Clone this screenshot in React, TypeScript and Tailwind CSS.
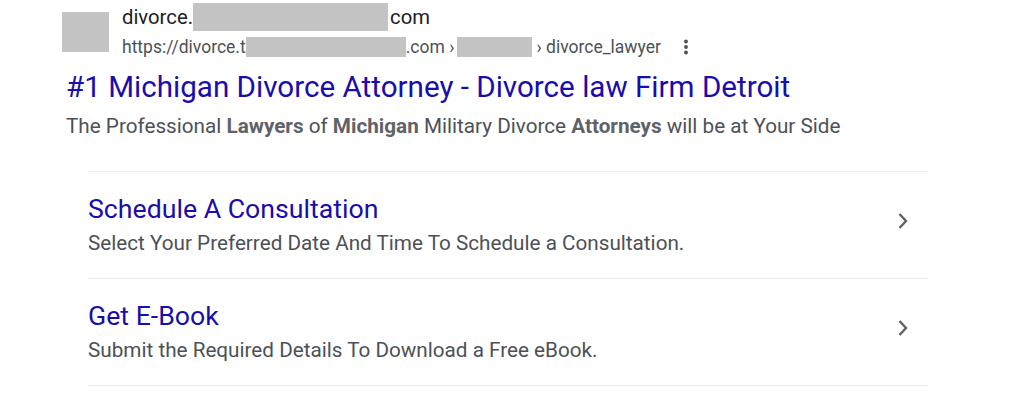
import React from "react";

const Redact = ({ w, h, className = "" }: { w: string; h: string; className?: string }) => (
  <span className={`inline-block bg-[#c4c4c4] align-middle ${w} ${h} ${className}`} />
);

const Chevron = () => (
  <svg width="26" height="26" viewBox="0 0 26 26" className="text-[#5f6368]">
    <path d="M10.5 6 17 13l-6.5 7" fill="none" stroke="currentColor" strokeWidth="2.4" />
  </svg>
);

const Sitelink = ({ title, text }: { title: string; text: string }) => (
  <div className="flex items-center justify-between border-b border-[#ebebeb] h-[107px]">
    <div className="flex flex-col">
      <span className="text-[26.7px] leading-[32px] text-[#1a0dab]">{title}</span>
      <span className="text-[20.7px] leading-[28px] text-[#4d5156] mt-[4px]">{text}</span>
    </div>
    <div className="mr-[13px] mb-[8px]">
      <Chevron />
    </div>
  </div>
);

export default function App() {
  return (
    <div className="w-[1024px] h-[403px] bg-white overflow-hidden font-['Roboto',sans-serif] pl-[62px]">
      {/* site header */}
      <div className="flex items-start pt-[3px] gap-[13px]">
        <div className="w-[47px] h-[40px] bg-[#c4c4c4] mt-[9px]" />
        <div className="flex flex-col">
          <div className="flex items-center text-[20.3px] leading-[28px] text-[#202124]">
            <span>divorce.</span>
            <Redact w="w-[195px]" h="h-[28px]" className="mr-[2px]" />
            <span>com</span>
          </div>
          <div className="flex items-center text-[17.5px] leading-[24px] text-[#4d5156] mt-[4px]">
            <span>https://divorce.t</span>
            <Redact w="w-[160px]" h="h-[20px]" />
            <span>.com ›</span>
            <Redact w="w-[75px]" h="h-[20px]" className="ml-[3px] mr-[4px]" />
            <span>› divorce_lawyer</span>
            <svg width="6" height="18" viewBox="0 0 6 18" className="ml-[22px] text-[#4d5156]">
              <circle cx="3" cy="3.5" r="1.9" fill="currentColor" />
              <circle cx="3" cy="9" r="1.9" fill="currentColor" />
              <circle cx="3" cy="14.5" r="1.9" fill="currentColor" />
            </svg>
          </div>
        </div>
      </div>

      {/* title + description */}
      <div className="mt-[8px] pl-[4px]">
        <div className="text-[29.6px] leading-[40px] text-[#1a0dab]">
          #1 Michigan Divorce Attorney - Divorce law Firm Detroit
        </div>
        <div className="text-[20.7px] leading-[28px] text-[#4d5156] mt-[5px]">
          The Professional <b className="font-bold text-[#5f6368]">Lawyers</b> of{" "}
          <b className="font-bold text-[#5f6368]">Michigan</b> Military Divorce{" "}
          <b className="font-bold text-[#5f6368]">Attorneys</b> will be at Your Side
        </div>
      </div>

      {/* sitelinks */}
      <div className="ml-[26px] w-[840px] mt-[31px] border-t border-[#ebebeb]">
        <Sitelink
          title="Schedule A Consultation"
          text="Select Your Preferred Date And Time To Schedule a Consultation."
        />
        <Sitelink
          title="Get E-Book"
          text="Submit the Required Details To Download a Free eBook."
        />
      </div>
    </div>
  );
}
